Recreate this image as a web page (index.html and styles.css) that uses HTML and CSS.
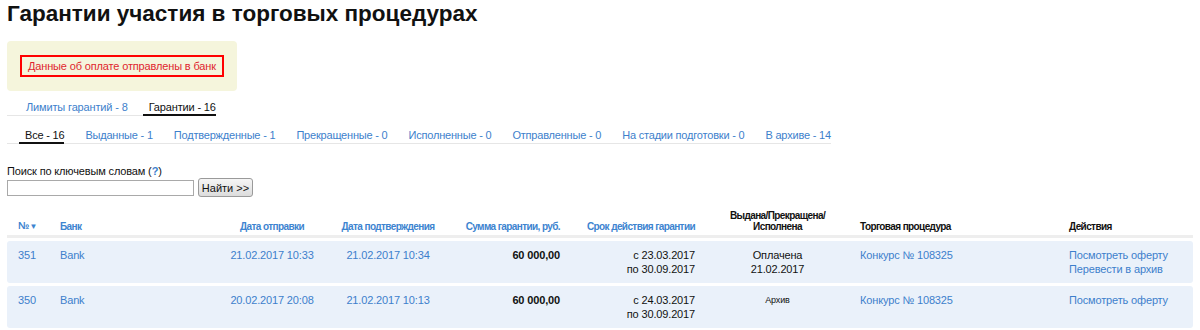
FILE: index.html
```html
<!DOCTYPE html>
<html lang="ru">
<head>
<meta charset="utf-8">
<title>Гарантии участия в торговых процедурах</title>
<link rel="stylesheet" href="styles.css">
</head>
<body>
<h1 class="title">Гарантии участия в торговых процедурах</h1>

<div class="notice">
  <div class="notice-text">Данные об оплате отправлены в банк</div>
</div>

<div class="tabs tabs-main">
  <a class="tab" href="#">Лимиты гарантий - 8</a>
  <a class="tab active" href="#">Гарантии - 16</a>
</div>

<div class="tabs tabs-sub">
  <a class="tab active" href="#">Все - 16</a>
  <a class="tab" href="#">Выданные - 1</a>
  <a class="tab" href="#">Подтвержденные - 1</a>
  <a class="tab" href="#">Прекращенные - 0</a>
  <a class="tab" href="#">Исполненные - 0</a>
  <a class="tab" href="#">Отправленные - 0</a>
  <a class="tab" href="#">На стадии подготовки - 0</a>
  <a class="tab" href="#">В архиве - 14</a>
</div>

<div class="search">
  <div class="search-label">Поиск по ключевым словам (<a class="help" href="#">?</a>)</div>
  <div class="search-row">
    <input class="search-input" type="text">
    <button class="search-btn" type="button">Найти &gt;&gt;</button>
  </div>
</div>

<div class="grid">
  <div class="grow head">
    <div class="c left link">№<span class="arrow">▼</span></div>
    <div class="c left link">Банк</div>
    <div class="c center link">Дата отправки</div>
    <div class="c center link">Дата подтверждения</div>
    <div class="c right link">Сумма гарантии, руб.</div>
    <div class="c right link">Срок действия гарантии</div>
    <div class="c center">Выдана/Прекращена/<br>Исполнена</div>
    <div class="c left">Торговая процедура</div>
    <div class="c left">Действия</div>
  </div>

  <div class="grow row">
    <div class="c left"><a href="#">351</a></div>
    <div class="c left"><a href="#">Bank</a></div>
    <div class="c center"><a href="#">21.02.2017 10:33</a></div>
    <div class="c center"><a href="#">21.02.2017 10:34</a></div>
    <div class="c right"><b>60 000,00</b></div>
    <div class="c right">с 23.03.2017<br>по 30.09.2017</div>
    <div class="c center">Оплачена<br>21.02.2017</div>
    <div class="c left"><a href="#">Конкурс № 108325</a></div>
    <div class="c left"><a href="#">Посмотреть оферту</a><br><a href="#">Перевести в архив</a></div>
  </div>

  <div class="grow row">
    <div class="c left"><a href="#">350</a></div>
    <div class="c left"><a href="#">Bank</a></div>
    <div class="c center"><a href="#">20.02.2017 20:08</a></div>
    <div class="c center"><a href="#">21.02.2017 10:13</a></div>
    <div class="c right"><b>60 000,00</b></div>
    <div class="c right">с 24.03.2017<br>по 30.09.2017</div>
    <div class="c center small">Архив</div>
    <div class="c left"><a href="#">Конкурс № 108325</a></div>
    <div class="c left"><a href="#">Посмотреть оферту</a></div>
  </div>
</div>
</body>
</html>
```

FILE: styles.css
```css
html, body {
  margin: 0;
  padding: 0;
  background: #fff;
}

body {
  padding: 0 7px;
  font-family: "Liberation Sans", Arial, sans-serif;
  font-size: 11px;
  line-height: 14px;
  letter-spacing: -0.15px;
  color: #111;
}

a {
  color: #3d7fcc;
  text-decoration: none;
}

.title {
  margin: 0;
  font-size: 22.5px;
  line-height: 28px;
  font-weight: bold;
  letter-spacing: 0;
  color: #111;
}

.notice {
  width: fit-content;
  margin-top: 13px;
  padding: 14px 13px;
  background: #f5f5dc;
  border-radius: 4px;
}

.notice-text {
  border: 2px solid #ff0000;
  padding: 2px 6px;
  color: #e0252f;
  font-size: 11px;
  line-height: 14px;
}

.tabs {
  display: flex;
  width: fit-content;
  border-bottom: 1px solid #e6e6e6;
}

.tabs-main {
  margin-top: 9px;
  padding-left: 13px;
  gap: 15px;
}

.tabs-sub {
  margin-top: 12px;
  padding-left: 12px;
  gap: 15px;
  letter-spacing: -0.2px;
}

.tab {
  padding-left: 6px;
  line-height: 14px;
  border-bottom: 2px solid transparent;
  margin-bottom: -1px;
}

.tab.active {
  color: #111;
  border-bottom-color: #111;
}

.search {
  margin-top: 20px;
}

.search-label {
  line-height: 14px;
}

.help {
  font-weight: bold;
}

.search-row {
  display: flex;
  align-items: center;
  gap: 4px;
}

.search-input {
  box-sizing: border-box;
  width: 187px;
  height: 16px;
  margin: 0;
  padding: 0 2px;
  border: 1px solid #a9a9a9;
  font: 11px "Liberation Sans", Arial, sans-serif;
}

.search-btn {
  box-sizing: border-box;
  width: 55px;
  height: 19px;
  margin: 0;
  padding: 0;
  border: 1px solid #9a9a9a;
  border-radius: 3px;
  background: linear-gradient(#f6f6f6, #dcdcdc);
  font: 11px "Liberation Sans", Arial, sans-serif;
  color: #111;
}

.grid {
  margin-top: 13px;
  display: flex;
  flex-direction: column;
  gap: 3px;
}

.grow {
  display: grid;
  grid-template-columns: 42px 154px 116px 116px 114px 135px 165px 209px 124px;
  padding-left: 11px;
}

.head {
  align-items: end;
  padding-bottom: 3px;
  border-bottom: 3px solid #eeeeee;
  font-size: 10px;
  line-height: 11px;
  font-weight: bold;
  letter-spacing: -0.6px;
  color: #111;
}

.head .link {
  color: #3d84d0;
}

.arrow {
  font-size: 8px;
  margin-left: 1px;
}

.row {
  background: #eaf1fa;
  border-radius: 3px;
  padding-top: 7px;
  padding-bottom: 7px;
  align-items: start;
}

.c.left { text-align: left; }
.c.center { text-align: center; }
.c.right { text-align: right; }

.row .small {
  font-size: 9px;
}
```
